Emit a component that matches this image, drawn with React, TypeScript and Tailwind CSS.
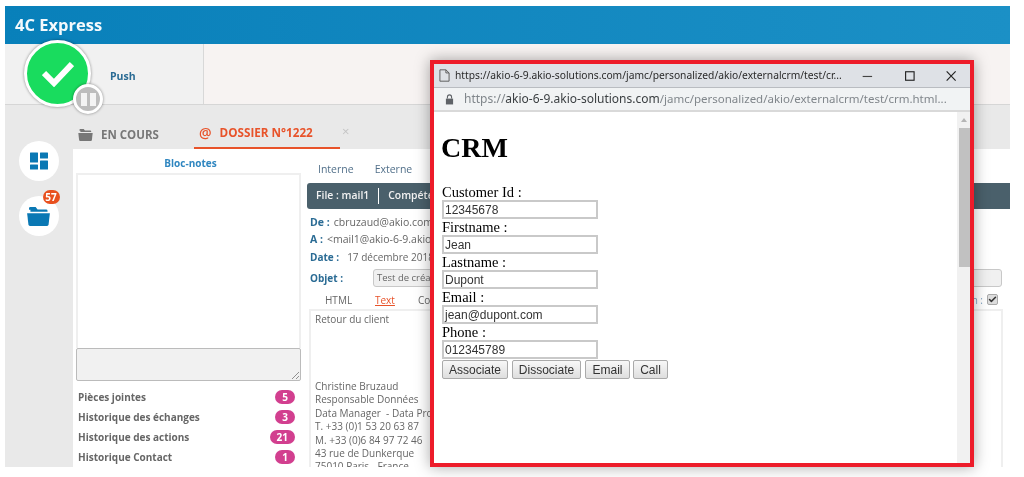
import React from 'react';
import { Check } from 'lucide-react';

const counters = [
  { label: 'Pièces jointes', count: '5' },
  { label: 'Historique des échanges', count: '3' },
  { label: 'Historique des actions', count: '21' },
  { label: 'Historique Contact', count: '1' },
];

const crmFields = [
  { label: 'Customer Id :', value: '12345678' },
  { label: 'Firstname :', value: 'Jean' },
  { label: 'Lastname :', value: 'Dupont' },
  { label: 'Email :', value: 'jean@dupont.com' },
  { label: 'Phone :', value: '012345789' },
];

const signature = [
  'Christine Bruzaud',
  'Responsable Données',
  'Data Manager  - Data Protection Officer',
  'T. +33 (0)1 53 20 63 87',
  'M. +33 (0)6 84 97 72 46',
  '43 rue de Dunkerque',
  '75010 Paris - France',
];

const FolderOpen = ({ className }: { className: string }) => (
  <svg viewBox="0 0 24 20" className={className} fill="currentColor">
    <path d="M3 0h6l2 2.5h9a1.5 1.5 0 0 1 1.5 1.5v1H3.5V3H2V1.5A1.5 1.5 0 0 1 3 0z" />
    <path d="M0 6.5h24l-1.4 12A1.7 1.7 0 0 1 21 20H3a1.7 1.7 0 0 1-1.6-1.5z" />
  </svg>
);

const CrmPopup = () => (
  <div className="absolute left-[430px] top-[60px] flex h-[407px] w-[544px] flex-col border-[4px] border-[#ed1c2a] bg-white shadow-[0_0_14px_rgba(0,0,0,0.35)]">
    <div className="flex h-[24px] shrink-0 items-center border-b border-[#b9bcc1] bg-[#dee1e6] pl-[5px] font-['Noto_Sans',sans-serif] text-[10.25px] text-[#2a2a2a]">
      <svg viewBox="0 0 12 14" className="h-[13px] w-[11px] shrink-0" fill="none" stroke="#555" strokeWidth="1">
        <path d="M1 .8h6.5L11 4.2v9H1zM7.5.8v3.4H11" />
      </svg>
      <span className="ml-[5px] w-[392px] whitespace-nowrap">https://akio-6-9.akio-solutions.com/jamc/personalized/akio/externalcrm/test/cr...</span>
      <svg viewBox="0 0 120 14" className="ml-[15px] h-[14px] w-[120px]" fill="none" stroke="#222" strokeWidth="1.2">
        <path d="M6 7.5h10" stroke="#444" />
        <rect x="51.500" y="2.500" width="9" height="9" />
        <path d="M95 2l9.500 10M104.500 2 95 12" />
      </svg>
    </div>
    <div className="flex h-[24px] shrink-0 items-center border-b-2 border-[#d9d9d9] bg-[#f1f3f4] pl-[11px] font-['Noto_Sans',sans-serif] text-[12px] text-[#80868b]">
      <svg viewBox="0 0 10 12" className="h-[11px] w-[9px] shrink-0" fill="#5f6368">
        <path d="M1 5h8v6.500H1z" />
        <path d="M2.700 5V3.200a2.300 2.300 0 0 1 4.600 0V5" fill="none" stroke="#5f6368" strokeWidth="1.200" />
      </svg>
      <span className="ml-[10px] whitespace-nowrap">
        https://<span className="text-[#3c4043]">akio-6-9.akio-solutions.com</span>
        <span className="text-[11.500px]">/jamc/personalized/akio/externalcrm/test/crm.html...</span>
      </span>
    </div>
    <div className="flex min-h-0 flex-1">
      <div className="flex-1 pl-[7px] pt-[20px] font-['Liberation_Serif',serif] text-[14.500px] leading-[16px] text-black">
        <h1 className="mb-[20px] text-[28px] font-bold leading-[32px]">CRM</h1>
        <div className="ml-[1px]">
          {crmFields.map((field) => (
            <div key={field.label}>
              <div className="whitespace-nowrap">{field.label}</div>
              <div className="flex h-[19px] w-[156px] items-center border-2 border-[#c9c9c9] pl-px font-['Liberation_Sans',sans-serif] text-[12px] text-[#333]">
                {field.value}
              </div>
            </div>
          ))}
          <div className="mt-[1px] flex gap-[4px] font-['Liberation_Sans',sans-serif] text-[12px] text-[#333]">
            <button className="h-[19px] w-[66px] rounded-[2px] border border-[#aaa] bg-gradient-to-b from-[#f8f8f8] to-[#dedede]">Associate</button>
            <button className="h-[19px] w-[69px] rounded-[2px] border border-[#aaa] bg-gradient-to-b from-[#f8f8f8] to-[#dedede]">Dissociate</button>
            <button className="h-[19px] w-[45px] rounded-[2px] border border-[#aaa] bg-gradient-to-b from-[#f8f8f8] to-[#dedede]">Email</button>
            <button className="-ml-px h-[19px] w-[35px] rounded-[2px] border border-[#aaa] bg-gradient-to-b from-[#f8f8f8] to-[#dedede]">Call</button>
          </div>
        </div>
      </div>
      <div className="flex w-[13px] shrink-0 flex-col items-end bg-[#f1f1f1]">
        <div className="flex h-[16px] w-full items-center justify-center">
          <div className="h-0 w-0 border-x-[3px] border-b-[4px] border-x-transparent border-b-[#b5b5b5]" />
        </div>
        <div className="h-[139px] w-[11px] bg-[#c1c1c1]" />
      </div>
    </div>
  </div>
);

export default function App() {
  return (
    <div className="relative h-[477px] w-[1024px] overflow-hidden bg-white pl-[5px] pt-[6px] font-['Open_Sans',sans-serif] blur-[0.3px]">
      <div className="flex h-[461px] w-[1005px] flex-col">
        <header className="flex h-[38px] shrink-0 items-center bg-gradient-to-r from-[#0880ba] to-[#1b90c6] pl-[10px] text-[16.500px] font-bold text-[#f4f9fc]">
          4C Express
        </header>

        <div className="flex h-[61px] shrink-0 border-b border-[#d6d6d6]">
          <div className="flex w-[199px] items-center border-r border-[#d8d8d8] bg-[#f1f1f1] pl-[105px] pt-[6px] text-[10.500px] font-bold text-[#2a6b94]">
            Push
          </div>
          <div className="flex-1 bg-[#f7f3f2]" />
        </div>

        <div className="flex min-h-0 flex-1">
          <aside className="flex w-[68px] shrink-0 flex-col items-center gap-[15px] bg-[#e9e9e9] pr-[1px] pt-[36px]">
            <div className="flex h-[40px] w-[40px] items-center justify-center rounded-full bg-white text-[#0a78b4]">
              <svg viewBox="0 0 18 17" className="h-[18px] w-[18px]" fill="currentColor">
                <rect width="8" height="10" rx="0.5" />
                <rect x="10" width="8" height="6" rx="0.5" />
                <rect y="12" width="8" height="5" rx="0.5" />
                <rect x="10" y="8" width="8" height="9" rx="0.5" />
              </svg>
            </div>
            <div className="relative flex h-[40px] w-[40px] items-center justify-center rounded-full bg-white text-[#0a78b4]">
              <FolderOpen className="h-[19px] w-[23px]" />
              <span className="absolute left-[24px] top-[-6px] flex h-[14px] w-[17px] items-center justify-center rounded-full bg-[#e8501f] text-[10px] font-bold text-white">
                57
              </span>
            </div>
          </aside>

          <div className="flex min-w-0 flex-1 flex-col">
            <div className="flex h-[44px] shrink-0 bg-[#e9e9e9] text-[11.500px] font-bold">
              <div className="flex h-full w-[121px] items-center pl-[5px] pt-[15px] text-[#777]">
                <FolderOpen className="h-[12px] w-[15px]" />
                <span className="ml-[8px]">EN COURS</span>
              </div>
              <div className="flex h-full w-[146px] items-center border-b-2 border-[#e8532a] pl-[5px] pt-[13px] text-[#e8532a]">
                <span className="text-[14px] font-semibold">@</span>
                <span className="ml-[8px] whitespace-nowrap text-[11.700px]">DOSSIER N°1222</span>
              </div>
              <span className="ml-[2px] pt-[20px] text-[13px] font-normal leading-[13px] text-[#c4c4c4]">×</span>
            </div>

            <div className="flex min-h-0 flex-1 bg-white">
              <section className="flex w-[234px] shrink-0 flex-col pl-[3px]">
                <div className="w-[229px] pt-[7px] text-center text-[10px] font-bold leading-[14px] text-[#2f86c0]">Bloc-notes</div>
                <div className="mt-[3px] h-[179px] w-[225px] border-2 border-b-0 border-[#efefef]" />
                <div className="relative h-[34px] w-[225px] rounded-[2px] border border-[#bbb] bg-[#f1f1f1]">
                  <svg viewBox="0 0 8 8" className="absolute bottom-[1px] right-[1px] h-[8px] w-[8px]" stroke="#777" strokeWidth="0.8">
                    <path d="M1 8l7-7M5 8l3-3" />
                  </svg>
                </div>
                <ul className="mt-[6px] w-[219px] pl-[2px] text-[10px] font-bold text-[#666]">
                  {counters.map((item) => (
                    <li key={item.label} className="flex h-[20px] items-center justify-between">
                      <span>{item.label}</span>
                      <span className="flex h-[14px] min-w-[20px] items-center justify-center rounded-full bg-[#d23f8f] px-[7px] text-[10px] text-white">
                        {item.count}
                      </span>
                    </li>
                  ))}
                </ul>
              </section>

              <section className="flex min-w-0 flex-1 flex-col text-[10px] text-[#666]">
                <div className="flex h-[34px] shrink-0 items-end gap-[21px] pb-[5px] pl-[11px] text-[10.500px]">
                  <span className="text-[#52708a]">Interne</span>
                  <span className="text-[#52708a]">Externe</span>
                </div>
                <div className="flex h-[26px] shrink-0 items-center rounded-l-[3px] bg-[#4a606b] pl-[9px] text-[10.400px] font-semibold text-[#f2f2f2]">
                  File : mail1
                  <span className="mx-[9px] h-[16px] w-px bg-white" />
                  Compétences
                </div>
                <div className="flex h-[22px] items-end pl-[3px] text-[10.500px]">
                  <b className="mr-[4px] text-[#2a6b94]">De :</b>cbruzaud@akio.com
                </div>
                <div className="flex h-[17px] items-end pl-[3px] text-[10.500px]">
                  <b className="mr-[4px] text-[#2a6b94]">A :</b>&lt;mail1@akio-6-9.akio-solutions.com&gt;
                </div>
                <div className="flex h-[17px] items-end pl-[3px]">
                  <b className="mr-[8px] text-[#2a6b94]">Date :</b>17 décembre 2018
                </div>
                <div className="mt-[4px] flex h-[18px] w-[695px] items-center pl-[3px]">
                  <b className="w-[63px] text-[#2a6b94]">Objet :</b>
                  <div className="flex h-[18px] flex-1 items-center rounded-[3px] border border-[#c8c8c8] bg-[#f0f0f0] pl-[3px] text-[9.500px]">
                    Test de création
                  </div>
                </div>
                <div className="relative flex h-[22px] w-[695px] items-end pb-[1px] pl-[18px]">
                  <span className="w-[50px]">HTML</span>
                  <span className="w-[43px] text-[#e8532a] underline">Text</span>
                  <span>Commentaires</span>
                  <span className="ml-auto mr-[19px] text-[#7fa3c4]">n :</span>
                  <span className="absolute right-[4px] top-[7px] flex h-[11px] w-[11px] items-center justify-center rounded-[2px] border border-[#aaa] bg-[#ddd] text-[#333]">
                    <Check className="h-[9px] w-[9px]" strokeWidth={4} />
                  </span>
                </div>
                <div className="ml-[2px] min-h-0 w-[694px] flex-1 overflow-hidden border-2 border-b-0 border-[#efefef] pl-[4px] pt-[2px] text-[10px] leading-[13.400px]">
                  <div className="h-[67px]">Retour du client</div>
                  {signature.map((line) => (
                    <div key={line} className="whitespace-pre">{line}</div>
                  ))}
                </div>
              </section>
            </div>
          </div>
        </div>
      </div>

      <div className="absolute left-[24px] top-[40px] flex h-[67px] w-[67px] items-center justify-center rounded-full border-[3px] border-white bg-[#19dc5e] shadow-[0_0_3px_rgba(0,0,0,0.45)]">
        <svg viewBox="0 0 32 26" className="h-[26px] w-[32px]" fill="none" stroke="white" strokeWidth="6">
          <path d="M2 12l10 10L30 3" />
        </svg>
      </div>
      <div className="absolute left-[73px] top-[84px] flex h-[30px] w-[30px] items-center justify-center gap-[3px] rounded-full border-[3px] border-white bg-[#bdbdbd] shadow-[0_0_3px_rgba(0,0,0,0.45)]">
        <div className="h-[13px] w-[6px] bg-[#f4f4f4]" />
        <div className="h-[13px] w-[6px] bg-[#f4f4f4]" />
      </div>

      <CrmPopup />
    </div>
  );
}
